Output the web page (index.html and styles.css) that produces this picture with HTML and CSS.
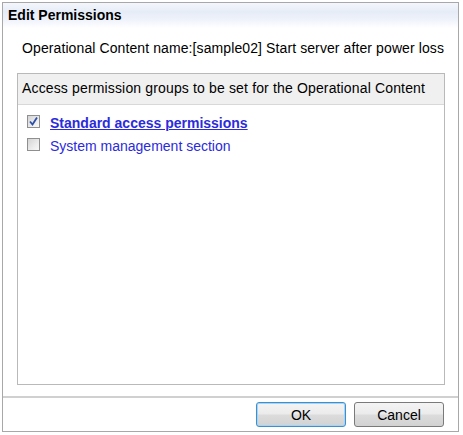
FILE: index.html
```html
<!DOCTYPE html>
<html>
<head>
<meta charset="utf-8">
<link rel="stylesheet" href="styles.css">
</head>
<body>
<div class="dialog">
  <div class="titlebar">Edit Permissions</div>
  <div class="content-name">Operational Content name:[sample02] Start server after power loss</div>
  <div class="panel">
    <div class="panel-head">Access permission groups to be set for the Operational Content</div>
    <div class="panel-body">
      <label class="row">
        <span class="cb checked"><svg width="11" height="11" viewBox="0 0 11 11"><path d="M2 5.5 L4.5 8.5 L9 1.5" fill="none" stroke="#2b4fa8" stroke-width="1.8"/></svg></span>
        <span class="link selected">Standard access permissions</span>
      </label>
      <label class="row">
        <span class="cb"></span>
        <span class="link">System management section</span>
      </label>
    </div>
  </div>
  <div class="footer">
    <button class="btn ok">OK</button>
    <button class="btn">Cancel</button>
  </div>
</div>
</body>
</html>
```
FILE: styles.css
```css
html, body {
  margin: 0;
  padding: 0;
  background: #ffffff;
}
body {
  font-family: "Liberation Sans", Arial, sans-serif;
  font-size: 14px;
  color: #000;
}
.dialog {
  margin: 2px 0 0 2px;
  width: 457px;
  height: 430px;
  border: 1px solid #a8a8a8;
  box-sizing: border-box;
  display: flex;
  flex-direction: column;
  background: #fff;
}
.titlebar {
  height: 25px;
  line-height: 24px;
  padding-left: 5px;
  font-weight: bold;
  font-size: 14px;
  background: linear-gradient(to bottom, #f4f6fb 0%, #e6ecf7 35%, #eef2fa 65%, #ffffff 100%);
}
.content-name {
  padding: 12px 0 0 19px;
  height: 32px;
  box-sizing: border-box;
  line-height: 16px;
  letter-spacing: 0.1px;
}
.panel {
  margin: 13px 13px 0 14px;
  border: 1px solid #b9b9b9;
  flex: 1;
  display: flex;
  flex-direction: column;
}
.panel-head {
  background: #f0f0f0;
  border-bottom: 1px solid #d8d8d8;
  height: 31px;
  line-height: 28px;
  padding-left: 4px;
  box-sizing: border-box;
  letter-spacing: 0.15px;
}
.panel-body {
  padding: 10px 0 0 9px;
  display: flex;
  flex-direction: column;
  gap: 10px;
}
.row {
  display: flex;
  align-items: center;
  gap: 10px;
  height: 13px;
}
.cb {
  width: 11px;
  height: 11px;
  border: 1px solid #8f8f8f;
  background: linear-gradient(135deg, #d4d4d4 0%, #ececec 60%, #f8f8f8 100%);
  display: flex;
  align-items: center;
  justify-content: center;
}
.link {
  color: #2b2bdc;
  font-size: 14px;
  line-height: 16px;
  padding-top: 2px;
}
.link.selected {
  font-weight: bold;
  text-decoration: underline;
}
.footer {
  margin-top: 11px;
  border-top: 2px solid #d0d0d0;
  height: 35px;
  box-sizing: border-box;
  display: flex;
  justify-content: flex-end;
  align-items: flex-start;
  padding: 4px 14px 0 0;
  gap: 8px;
}
.btn {
  width: 90px;
  height: 25px;
  border: 1px solid #7a7a7a;
  border-radius: 3px;
  background: linear-gradient(to bottom, #f4f4f4 0%, #ebebeb 48%, #dcdcdc 52%, #d2d2d2 100%);
  font-family: "Liberation Sans", Arial, sans-serif;
  font-size: 14px;
  color: #000;
  padding: 0;
}
.btn.ok {
  border: 1px solid #3c8fd0;
  box-shadow: inset 0 0 0 1px #a8d4f4;
}
```
